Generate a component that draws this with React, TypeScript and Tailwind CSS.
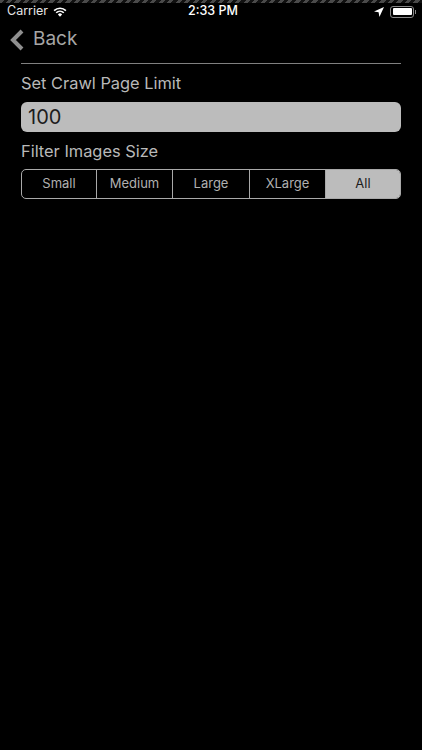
const sizes = [
  { label: "Small", width: "w-[75px]" },
  { label: "Medium", width: "w-[76px]" },
  { label: "Large", width: "w-[77px]" },
  { label: "XLarge", width: "w-[76px]" },
  { label: "All", width: "w-[74px]" },
];

export default function App() {
  return (
    <div className="flex h-[750px] w-[422px] flex-col overflow-hidden bg-black font-['Inter',sans-serif] text-[#b9b9b9]">
      <div className="h-[3px] w-full bg-[repeating-linear-gradient(135deg,#4a4a4a_0,#4a4a4a_3px,#111111_3px,#111111_6px)]" />
      {/* status bar */}
      <div className="relative flex h-[17px] items-center pl-[7px] pr-[6px] text-[12.5px] leading-none text-white">
        <span className="text-[#e6e6e6]">Carrier</span>
        <svg className="ml-[5px]" width="14" height="10" viewBox="0 0 15 11" fill="none">
          <path d="M1 4a9.4 9.4 0 0 1 13 0" stroke="white" strokeWidth="1.8" />
          <path d="M3.3 6.3a6.1 6.1 0 0 1 8.4 0" stroke="white" strokeWidth="1.8" />
          <path d="M5.2 8.2a3.2 3.2 0 0 1 4.6 0L7.5 10.6z" fill="white" />
        </svg>
        <span className="absolute left-[188px] font-medium">2:33 PM</span>
        <svg className="ml-auto mr-[6px]" width="10" height="10" viewBox="0 0 10 10">
          <path d="M10 0 0 4.6l4.6.7.8 4.7z" fill="white" />
        </svg>
        <div className="flex items-center">
          <div className="h-[12px] w-[24px] rounded-[3px] border border-[#8a8a8a] p-[1.5px]">
            <div className="h-full w-full rounded-[1px] bg-white" />
          </div>
          <div className="ml-[1px] h-[4px] w-[1px] bg-[#8a8a8a]" />
        </div>
      </div>
      {/* back */}
      <div className="flex h-[43px] items-center pb-[4px] pl-[9px] text-[19px] text-[#a6a6a6]">
        <svg width="15" height="22" viewBox="0 0 15 22" fill="none">
          <path d="M13 2 4 11l9 9" stroke="#8f8f8f" strokeWidth="4" />
        </svg>
        <span className="ml-[9px]">Back</span>
      </div>
      {/* content */}
      <div className="mx-[21px] flex flex-col border-t border-[#808080] pt-[9px]">
        <div className="text-[16.4px] leading-[20px]">Set Crawl Page Limit</div>
        <div className="mt-[9px] flex h-[30px] items-center rounded-[6px] bg-[#bcbcbc] pl-[7px] text-[20px] text-[#1c1c1c]">
          100
        </div>
        <div className="mt-[9px] text-[16.4px] leading-[20px]">Filter Images Size</div>
        <div className="mt-[8px] flex h-[30px] overflow-hidden rounded-[5px] border border-[#a9a9a9]">
          {sizes.map((size) => (
            <div
              key={size.label}
              className={
                size.label === "All"
                  ? `flex ${size.width} items-center justify-center bg-[#bcbcbc] text-[13px] text-[#1c1c1c]`
                  : `flex ${size.width} items-center justify-center border-r border-[#a9a9a9] text-[13px] text-[#b0b0b0]`
              }
            >
              {size.label}
            </div>
          ))}
        </div>
      </div>
    </div>
  );
}
